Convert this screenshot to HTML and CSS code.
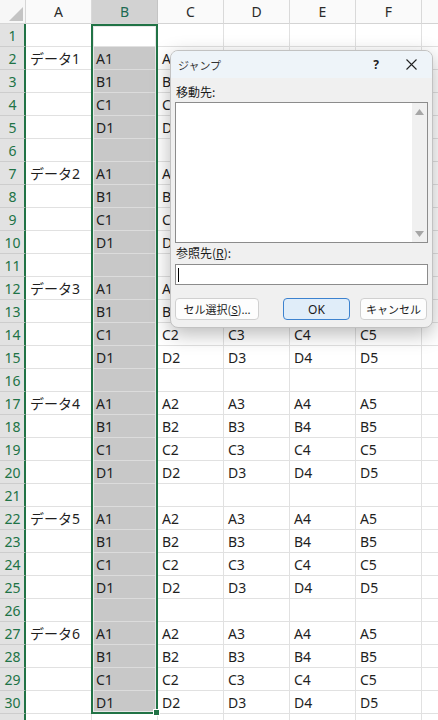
FILE: index.html
```html
<!DOCTYPE html>
<html lang="ja">
<head>
<meta charset="utf-8">
<link rel="stylesheet" href="styles.css">
</head>
<body>
<div class="sheet">
  <div class="corner"><svg class="tri" width="26" height="24" viewBox="0 0 26 24"><polygon points="23,7 23,21 9,21" fill="#c4c4c4"/></svg></div>
  <div class="ch">A</div><div class="ch sel">B</div><div class="ch">C</div><div class="ch">D</div><div class="ch">E</div><div class="ch">F</div><div class="ch"></div>

  <div class="rh">1</div><div class="c"></div><div class="c act"></div><div class="c"></div><div class="c"></div><div class="c"></div><div class="c"></div><div class="c"></div>
  <div class="rh">2</div><div class="c">データ1</div><div class="c s">A1</div><div class="c">A2</div><div class="c">A3</div><div class="c">A4</div><div class="c">A5</div><div class="c"></div>
  <div class="rh">3</div><div class="c"></div><div class="c s">B1</div><div class="c">B2</div><div class="c">B3</div><div class="c">B4</div><div class="c">B5</div><div class="c"></div>
  <div class="rh">4</div><div class="c"></div><div class="c s">C1</div><div class="c">C2</div><div class="c">C3</div><div class="c">C4</div><div class="c">C5</div><div class="c"></div>
  <div class="rh">5</div><div class="c"></div><div class="c s">D1</div><div class="c">D2</div><div class="c">D3</div><div class="c">D4</div><div class="c">D5</div><div class="c"></div>
  <div class="rh">6</div><div class="c"></div><div class="c s"></div><div class="c"></div><div class="c"></div><div class="c"></div><div class="c"></div><div class="c"></div>
  <div class="rh">7</div><div class="c">データ2</div><div class="c s">A1</div><div class="c">A2</div><div class="c">A3</div><div class="c">A4</div><div class="c">A5</div><div class="c"></div>
  <div class="rh">8</div><div class="c"></div><div class="c s">B1</div><div class="c">B2</div><div class="c">B3</div><div class="c">B4</div><div class="c">B5</div><div class="c"></div>
  <div class="rh">9</div><div class="c"></div><div class="c s">C1</div><div class="c">C2</div><div class="c">C3</div><div class="c">C4</div><div class="c">C5</div><div class="c"></div>
  <div class="rh">10</div><div class="c"></div><div class="c s">D1</div><div class="c">D2</div><div class="c">D3</div><div class="c">D4</div><div class="c">D5</div><div class="c"></div>
  <div class="rh">11</div><div class="c"></div><div class="c s"></div><div class="c"></div><div class="c"></div><div class="c"></div><div class="c"></div><div class="c"></div>
  <div class="rh">12</div><div class="c">データ3</div><div class="c s">A1</div><div class="c">A2</div><div class="c">A3</div><div class="c">A4</div><div class="c">A5</div><div class="c"></div>
  <div class="rh">13</div><div class="c"></div><div class="c s">B1</div><div class="c">B2</div><div class="c">B3</div><div class="c">B4</div><div class="c">B5</div><div class="c"></div>
  <div class="rh">14</div><div class="c"></div><div class="c s">C1</div><div class="c">C2</div><div class="c">C3</div><div class="c">C4</div><div class="c">C5</div><div class="c"></div>
  <div class="rh">15</div><div class="c"></div><div class="c s">D1</div><div class="c">D2</div><div class="c">D3</div><div class="c">D4</div><div class="c">D5</div><div class="c"></div>
  <div class="rh">16</div><div class="c"></div><div class="c s"></div><div class="c"></div><div class="c"></div><div class="c"></div><div class="c"></div><div class="c"></div>
  <div class="rh">17</div><div class="c">データ4</div><div class="c s">A1</div><div class="c">A2</div><div class="c">A3</div><div class="c">A4</div><div class="c">A5</div><div class="c"></div>
  <div class="rh">18</div><div class="c"></div><div class="c s">B1</div><div class="c">B2</div><div class="c">B3</div><div class="c">B4</div><div class="c">B5</div><div class="c"></div>
  <div class="rh">19</div><div class="c"></div><div class="c s">C1</div><div class="c">C2</div><div class="c">C3</div><div class="c">C4</div><div class="c">C5</div><div class="c"></div>
  <div class="rh">20</div><div class="c"></div><div class="c s">D1</div><div class="c">D2</div><div class="c">D3</div><div class="c">D4</div><div class="c">D5</div><div class="c"></div>
  <div class="rh">21</div><div class="c"></div><div class="c s"></div><div class="c"></div><div class="c"></div><div class="c"></div><div class="c"></div><div class="c"></div>
  <div class="rh">22</div><div class="c">データ5</div><div class="c s">A1</div><div class="c">A2</div><div class="c">A3</div><div class="c">A4</div><div class="c">A5</div><div class="c"></div>
  <div class="rh">23</div><div class="c"></div><div class="c s">B1</div><div class="c">B2</div><div class="c">B3</div><div class="c">B4</div><div class="c">B5</div><div class="c"></div>
  <div class="rh">24</div><div class="c"></div><div class="c s">C1</div><div class="c">C2</div><div class="c">C3</div><div class="c">C4</div><div class="c">C5</div><div class="c"></div>
  <div class="rh">25</div><div class="c"></div><div class="c s">D1</div><div class="c">D2</div><div class="c">D3</div><div class="c">D4</div><div class="c">D5</div><div class="c"></div>
  <div class="rh">26</div><div class="c"></div><div class="c s"></div><div class="c"></div><div class="c"></div><div class="c"></div><div class="c"></div><div class="c"></div>
  <div class="rh">27</div><div class="c">データ6</div><div class="c s">A1</div><div class="c">A2</div><div class="c">A3</div><div class="c">A4</div><div class="c">A5</div><div class="c"></div>
  <div class="rh">28</div><div class="c"></div><div class="c s">B1</div><div class="c">B2</div><div class="c">B3</div><div class="c">B4</div><div class="c">B5</div><div class="c"></div>
  <div class="rh">29</div><div class="c"></div><div class="c s">C1</div><div class="c">C2</div><div class="c">C3</div><div class="c">C4</div><div class="c">C5</div><div class="c"></div>
  <div class="rh">30</div><div class="c"></div><div class="c s">D1</div><div class="c">D2</div><div class="c">D3</div><div class="c">D4</div><div class="c">D5</div><div class="c"></div>
  <div class="rh last"></div><div class="c"></div><div class="c"></div><div class="c"></div><div class="c"></div><div class="c"></div><div class="c"></div><div class="c"></div>

  <div class="selbox"><span class="handle"></span></div>
</div>

<div class="dlg">
  <div class="tbar">
    <span class="ttl">ジャンプ</span>
    <span class="help">?</span>
    <span class="close"><svg width="11" height="11" viewBox="0 0 11 11"><path d="M0.5 0.5 L10.5 10.5 M10.5 0.5 L0.5 10.5" stroke="#222" stroke-width="1.1" fill="none"/></svg></span>
  </div>
  <div class="dbody">
    <div class="lbl first">移動先:</div>
    <div class="list">
      <div class="listarea"></div>
      <div class="vscroll">
        <svg width="9" height="6" viewBox="0 0 9 6"><polygon points="4.5,0 9,6 0,6" fill="#a6a6a6"/></svg>
        <svg width="9" height="6" viewBox="0 0 9 6"><polygon points="0,0 9,0 4.5,6" fill="#a6a6a6"/></svg>
      </div>
    </div>
    <div class="lbl">参照先(<u>R</u>):</div>
    <div class="input"><span class="caret"></span></div>
    <div class="btns">
      <div class="btn wide">セル選択(<u>S</u>)...</div>
      <div class="btn ok">OK</div>
      <div class="btn">キャンセル</div>
    </div>
  </div>
</div>
</body>
</html>
```

FILE: styles.css
```css
html, body {
  margin: 0;
  padding: 0;
}
body {
  width: 438px;
  height: 720px;
  overflow: hidden;
  background: #ffffff;
  font-family: "Noto Sans", "Noto Sans CJK JP", sans-serif;
  position: relative;
}
.sheet {
  display: grid;
  grid-template-columns: 26px repeat(7, 66px);
  grid-template-rows: 24px;
  grid-auto-rows: 23px;
  position: relative;
  width: 488px;
}
.corner {
  background: #f7f7f7;
  border-right: 1px solid #d6d6d6;
  border-bottom: 1px solid #d6d6d6;
  box-sizing: border-box;
  position: relative;
}
.tri {
  display: block;
}
.ch {
  box-sizing: border-box;
  background: #fafafa;
  border-right: 1px solid #d9d9d9;
  border-bottom: 1px solid #d4d4d4;
  display: flex;
  align-items: center;
  justify-content: center;
  font-size: 14px;
  color: #2b2b2b;
}
.ch.sel {
  background: #d2d2d2;
  color: #1c6a52;
  border-right-color: #c4c4c4;
}
.rh {
  box-sizing: border-box;
  background: #e2e2e2;
  color: #217346;
  border-right: 2px solid #217346;
  border-bottom: 1px solid #cdcdcd;
  display: flex;
  align-items: center;
  justify-content: center;
  font-size: 14px;
  padding-left: 1px;
}
.c {
  box-sizing: border-box;
  border-right: 1px solid #e1e1e1;
  border-bottom: 1px solid #e1e1e1;
  padding-left: 4px;
  display: flex;
  align-items: center;
  font-size: 14px;
  color: #1f1f1f;
  white-space: nowrap;
  overflow: hidden;
}
.c.s {
  background: #c8c8c8;
  border-bottom-color: #dcdcdc;
  border-right-color: #c8c8c8;
}
.selbox {
  position: absolute;
  grid-column: 3 / 4;
  grid-row: 2 / 32;
  top: 0;
  bottom: 0;
  left: -1px;
  right: 0;
  border: 2px solid #217346;
  box-shadow: inset 0 0 0 1px #e8e8e8;
  pointer-events: none;
}
.handle {
  position: absolute;
  right: -4px;
  bottom: -4px;
  width: 5px;
  height: 5px;
  background: #217346;
  border: 1px solid #ffffff;
}

/* dialog */
.dlg {
  position: absolute;
  left: 170px;
  top: 50px;
  width: 263px;
  height: 278px;
  box-sizing: border-box;
  background: #f0f0f0;
  border: 1px solid #c2c2c2;
  border-radius: 8px;
  box-shadow: 0 6px 20px rgba(0, 0, 0, 0.28);
  overflow: hidden;
  font-family: "Noto Sans CJK JP", sans-serif;
  font-size: 12px;
  color: #1a1a1a;
}
.tbar {
  height: 27px;
  background: #eef4f9;
  display: flex;
  align-items: center;
  padding-left: 7px;
}
.ttl {
  font-size: 11px;
  color: #333333;
}
.help {
  margin-left: auto;
  width: 20px;
  text-align: center;
  font-size: 12px;
  font-weight: bold;
  color: #222;
  font-family: "Noto Sans", sans-serif;
}
.close {
  width: 30px;
  margin-left: 10px;
  margin-right: 6px;
  display: flex;
  justify-content: center;
  align-items: center;
}
.close svg {
  display: block;
}
.dbody {
  padding: 0 4px;
  display: flex;
  flex-direction: column;
}
.lbl {
  line-height: 16px;
  height: 16px;
  margin-top: 2px;
  padding-left: 1px;
  font-size: 12px;
}
.lbl.first {
  margin-top: 6px;
}
.list {
  margin-top: 2px;
  height: 141px;
  box-sizing: border-box;
  border: 1px solid #8c8c8c;
  background: #ffffff;
  display: flex;
}
.listarea {
  flex: 1;
}
.vscroll {
  width: 15px;
  background: #f0f0f0;
  display: flex;
  flex-direction: column;
  justify-content: space-between;
  align-items: center;
  padding: 6px 0 5px;
}
.vscroll svg {
  display: block;
}
.input {
  margin-top: 3px;
  height: 21px;
  box-sizing: border-box;
  border: 1px solid #8c8c8c;
  background: #ffffff;
  display: flex;
  align-items: center;
  padding-left: 2px;
}
.caret {
  width: 1px;
  height: 14px;
  background: #000;
}
.btns {
  margin-top: 13px;
  display: flex;
  gap: 10px;
}
.btn {
  height: 22px;
  width: 67px;
  box-sizing: border-box;
  background: #fdfdfd;
  border: 1px solid #d0d0d0;
  border-radius: 4px;
  display: flex;
  align-items: center;
  justify-content: center;
  font-size: 11px;
  color: #1a1a1a;
  white-space: nowrap;
  overflow: hidden;
}
.btn.wide {
  width: 84px;
  margin-right: 14px;
}
.btn.ok {
  background: #e0edf9;
  border-color: #3c82cf;
  font-family: "Noto Sans", sans-serif;
  font-size: 12px;
}
```
